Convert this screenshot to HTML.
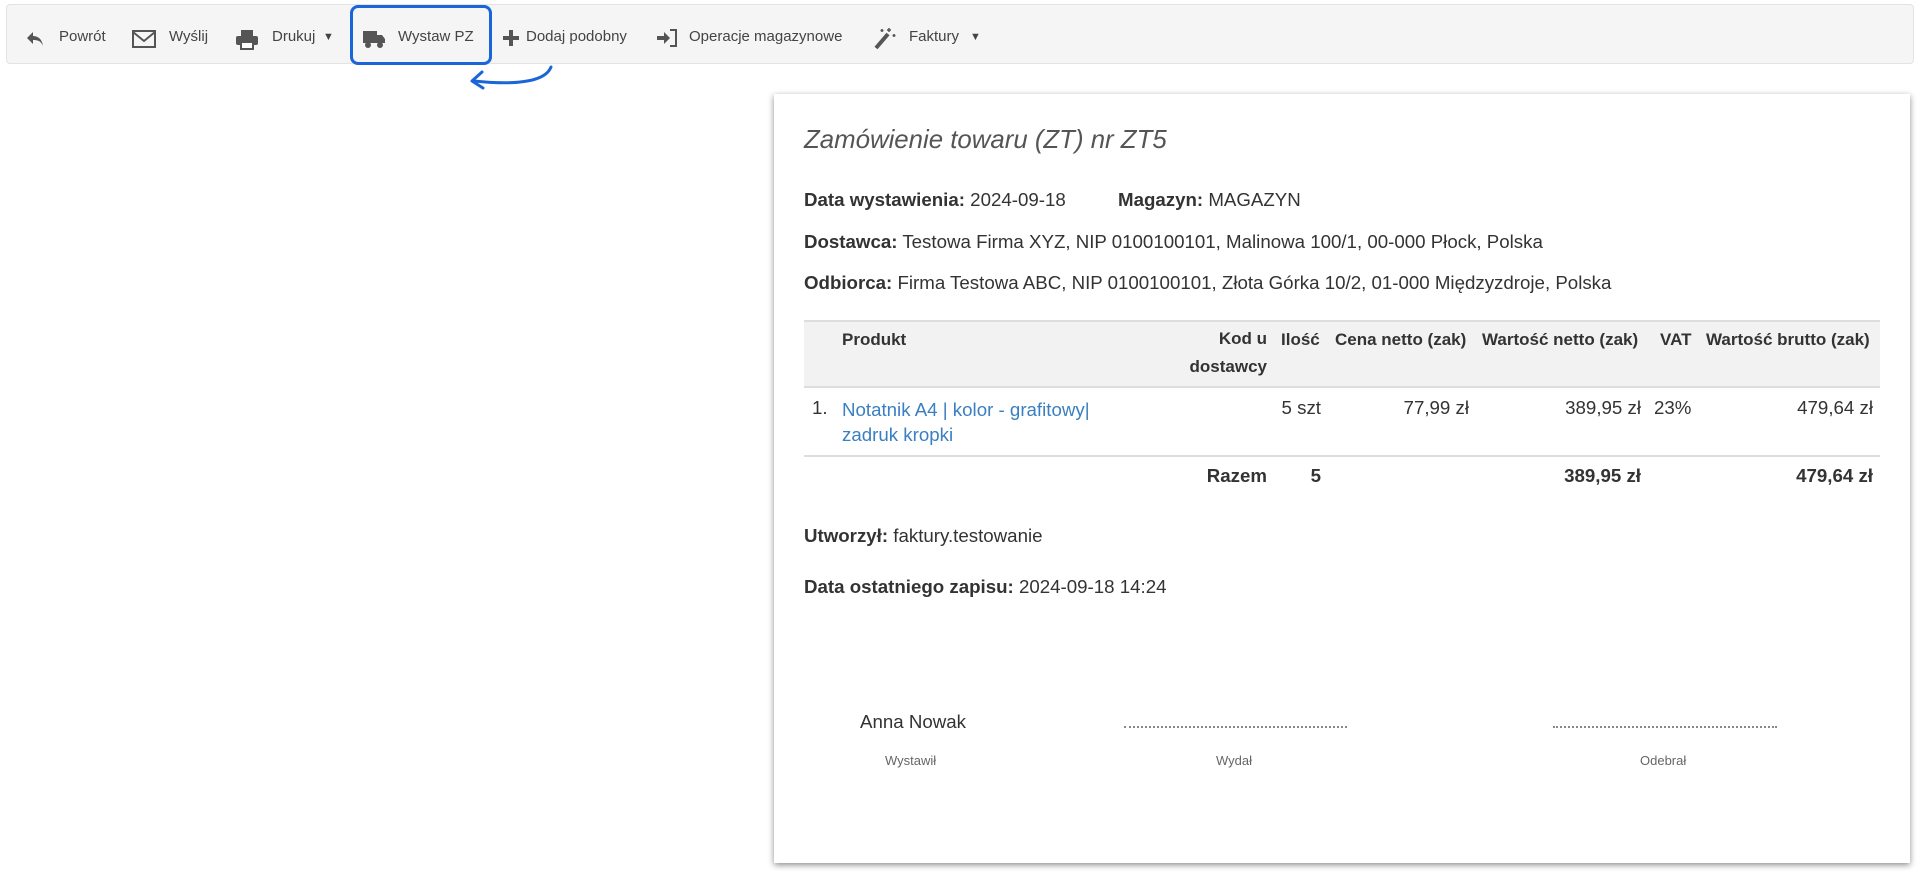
<!DOCTYPE html>
<html><head><meta charset="utf-8"><style>
*{box-sizing:border-box}
body{margin:0;width:1920px;height:875px;background:#fff;font-family:"Liberation Sans",sans-serif;color:#333;position:relative;overflow:hidden}
.tb{position:absolute;left:6px;top:4px;width:1908px;height:60px;background:#f5f5f5;border:1px solid #e3e3e3;border-radius:4px}
.it{position:absolute;top:28px;font-size:15px;color:#444;line-height:18px}
.ic{position:absolute}
.hl{position:absolute;left:350px;top:5px;width:142px;height:60px;border:3px solid #1a66d9;border-radius:8px}
.paper{position:absolute;left:774px;top:94px;width:1136px;height:769px;background:#fff;box-shadow:0 2px 6px rgba(0,0,0,.45)}
.a{position:absolute;font-size:18.7px;white-space:nowrap}
.h{font-size:17px}
b{font-weight:bold}
.r{text-align:right}
</style></head><body>
<div class="tb"></div>
<svg class="ic" style="left:26px;top:31px" width="18" height="16" viewBox="0 0 18 16"><path d="M7 1 L1 7 L7 13 V9 C12 9 15 10 17 15 C16 8 12 5 7 5 Z" fill="#555"/></svg>
<div class="it" style="left:59px">Powrót</div>
<svg class="ic" style="left:132px;top:30px" width="24" height="18" viewBox="0 0 24 18"><rect x="1" y="1" width="22" height="16" fill="none" stroke="#555" stroke-width="2"/><path d="M1 2 L12 11 L23 2" fill="none" stroke="#555" stroke-width="2"/></svg>
<div class="it" style="left:169px">Wyślij</div>
<svg class="ic" style="left:235px;top:29px" width="24" height="21" viewBox="0 0 24 21"><rect x="6" y="1" width="12" height="6" fill="#555"/><rect x="1" y="7" width="22" height="9" rx="2" fill="#555"/><rect x="6" y="13" width="12" height="7" fill="#fff" stroke="#555" stroke-width="2"/></svg>
<div class="it" style="left:272px">Drukuj</div>
<div class="it" style="left:323px;font-size:11px">▼</div>
<svg class="ic" style="left:362px;top:30px" width="24" height="19" viewBox="0 0 24 19"><rect x="1" y="1" width="14" height="12" fill="#555"/><path d="M15 5 H20 L23 9 V13 H15 Z" fill="#555"/><circle cx="6" cy="15" r="3" fill="#555"/><circle cx="18" cy="15" r="3" fill="#555"/></svg>
<div class="it" style="left:398px">Wystaw PZ</div>
<div class="hl"></div>
<svg class="ic" style="left:502px;top:29px" width="18" height="18" viewBox="0 0 18 18"><path d="M7 1h4v6h6v4h-6v6H7v-6H1V7h6z" fill="#555"/></svg>
<div class="it" style="left:526px">Dodaj podobny</div>
<svg class="ic" style="left:656px;top:29px" width="22" height="18" viewBox="0 0 22 18"><path d="M1 7h7V3l6 6-6 6v-4H1z" fill="#555"/><path d="M14 1h6v16h-6" fill="none" stroke="#555" stroke-width="2"/></svg>
<div class="it" style="left:689px">Operacje magazynowe</div>
<svg class="ic" style="left:873px;top:26px" width="24" height="24" viewBox="0 0 24 24"><path d="M3 22 L15 8" stroke="#555" stroke-width="4"/><path d="M16 2v4M14 4h4M21 8v3M19.5 9.5h3M9 3v3M7.5 4.5h3" stroke="#555" stroke-width="1.5"/></svg>
<div class="it" style="left:909px">Faktury</div>
<div class="it" style="left:970px;font-size:11px">▼</div>
<svg class="ic" style="left:462px;top:64px" width="96" height="30" viewBox="0 0 96 30"><path d="M89 3 C84 16 60 22 12 17" fill="none" stroke="#1a66d9" stroke-width="3" stroke-linecap="round"/><path d="M20 8 L10 17 L21 24" fill="none" stroke="#1a66d9" stroke-width="3" stroke-linecap="round" stroke-linejoin="round"/></svg>

<div class="paper"></div>
<div class="a" style="left:804px;top:126px;font-size:25.8px;font-style:italic;color:#555">Zamówienie towaru (ZT) nr ZT5</div>
<div class="a" style="left:804px;top:189px"><b>Data wystawienia:</b> 2024-09-18</div>
<div class="a" style="left:1118px;top:189px"><b>Magazyn:</b> MAGAZYN</div>
<div class="a" style="left:804px;top:231px"><b>Dostawca:</b> Testowa Firma XYZ, NIP 0100100101, Malinowa 100/1, 00-000 Płock, Polska</div>
<div class="a" style="left:804px;top:272px"><b>Odbiorca:</b> Firma Testowa ABC, NIP 0100100101, Złota Górka 10/2, 01-000 Międzyzdroje, Polska</div>
<div style="position:absolute;left:804px;top:320px;width:1076px;height:68px;background:#f2f2f2;border-top:2px solid #ddd;border-bottom:2px solid #ddd"></div>
<div class="a h" style="left:842px;top:330px"><b>Produkt</b></div>
<div class="a h r" style="right:653px;top:325px;line-height:28px"><b>Kod u<br>dostawcy</b></div>
<div class="a h" style="left:1281px;top:330px"><b>Ilość</b></div>
<div class="a h" style="left:1335px;top:330px"><b>Cena netto (zak)</b></div>
<div class="a h" style="left:1482px;top:330px"><b>Wartość netto (zak)</b></div>
<div class="a h" style="left:1660px;top:330px"><b>VAT</b></div>
<div class="a h" style="left:1706px;top:330px"><b>Wartość brutto (zak)</b></div>
<div class="a" style="left:812px;top:397px">1.</div>
<div class="a" style="left:842px;top:397px;color:#3a7fc1;line-height:25px">Notatnik A4 | kolor - grafitowy|<br>zadruk kropki</div>
<div class="a r" style="right:599px;top:397px">5 szt</div>
<div class="a r" style="right:451px;top:397px">77,99 zł</div>
<div class="a r" style="right:279px;top:397px">389,95 zł</div>
<div class="a" style="left:1654px;top:397px">23%</div>
<div class="a r" style="right:47px;top:397px">479,64 zł</div>
<div style="position:absolute;left:804px;top:455px;width:1076px;border-top:2px solid #ddd"></div>
<div class="a r" style="right:653px;top:465px"><b>Razem</b></div>
<div class="a r" style="right:599px;top:465px"><b>5</b></div>
<div class="a r" style="right:279px;top:465px"><b>389,95 zł</b></div>
<div class="a r" style="right:47px;top:465px"><b>479,64 zł</b></div>
<div class="a" style="left:804px;top:525px"><b>Utworzył:</b> faktury.testowanie</div>
<div class="a" style="left:804px;top:576px"><b>Data ostatniego zapisu:</b> 2024-09-18 14:24</div>
<div class="a" style="left:860px;top:711px">Anna Nowak</div>
<div style="position:absolute;left:1124px;top:726px;width:223px;border-top:2px dotted #888"></div>
<div style="position:absolute;left:1553px;top:726px;width:224px;border-top:2px dotted #888"></div>
<div class="a" style="left:885px;top:753px;font-size:13px;color:#666">Wystawił</div>
<div class="a" style="left:1216px;top:753px;font-size:13px;color:#666">Wydał</div>
<div class="a" style="left:1640px;top:753px;font-size:13px;color:#666">Odebrał</div>
</body></html>
